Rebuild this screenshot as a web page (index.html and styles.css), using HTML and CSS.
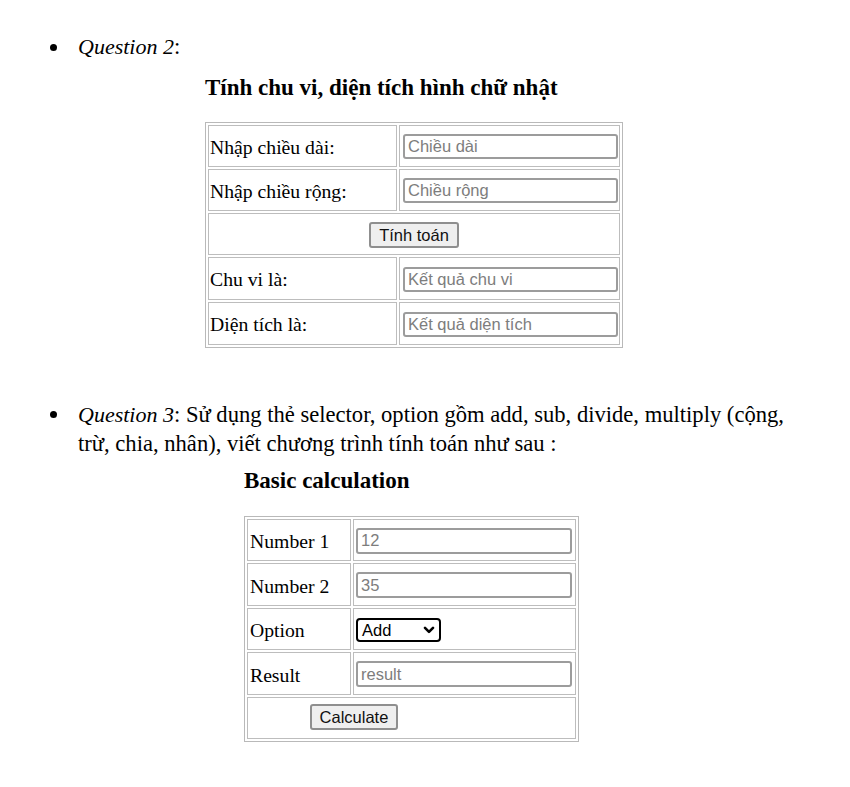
FILE: index.html
```html
<!DOCTYPE html>
<html lang="vi">
<head>
<meta charset="utf-8">
<title>Questions</title>
<link rel="stylesheet" href="styles.css">
</head>
<body>
<div class="doc">
  <div class="item q2">
    <span class="bullet"><span class="dot"></span></span>
    <div class="item-text"><em>Question 2</em>:</div>
  </div>

  <h2 class="title title-1">Tính chu vi, diện tích hình chữ nhật</h2>

  <div class="grid grid-1">
    <div class="cell label">Nhập chiều dài:</div>
    <div class="cell field"><input class="box" type="text" placeholder="Chiều dài"></div>
    <div class="cell label">Nhập chiều rộng:</div>
    <div class="cell field"><input class="box" type="text" placeholder="Chiều rộng"></div>
    <div class="cell span center"><button class="btn btn-1" type="button">Tính toán</button></div>
    <div class="cell label">Chu vi là:</div>
    <div class="cell field"><input class="box" type="text" placeholder="Kết quả chu vi"></div>
    <div class="cell label">Diện tích là:</div>
    <div class="cell field"><input class="box" type="text" placeholder="Kết quả diện tích"></div>
  </div>

  <div class="item q3">
    <span class="bullet"><span class="dot"></span></span>
    <div class="item-text"><em>Question 3</em>: Sử dụng thẻ selector, option gồm add, sub, divide, multiply (cộng, trừ, chia, nhân), viết chương trình tính toán như sau :</div>
  </div>

  <h2 class="title title-2">Basic calculation</h2>

  <div class="grid grid-2">
    <div class="cell label">Number 1</div>
    <div class="cell field"><input class="box" type="text" placeholder="12"></div>
    <div class="cell label">Number 2</div>
    <div class="cell field"><input class="box" type="text" placeholder="35"></div>
    <div class="cell label">Option</div>
    <div class="cell field">
      <div class="select">
        <span>Add</span>
        <svg class="chev" width="12" height="8" viewBox="0 0 12 8"><path d="M2 1.8 L6 5.8 L10 1.8" fill="none" stroke="#000" stroke-width="2.6" stroke-linecap="round" stroke-linejoin="round"/></svg>
      </div>
    </div>
    <div class="cell label">Result</div>
    <div class="cell field"><input class="box" type="text" placeholder="result"></div>
    <div class="cell span calc-cell"><button class="btn btn-2" type="button">Calculate</button></div>
  </div>
</div>
</body>
</html>
```
FILE: styles.css
```css
html, body {
  margin: 0;
  padding: 0;
  background: #ffffff;
}
body {
  font-family: "Liberation Serif", "Times New Roman", serif;
  color: #000;
}
.doc {
  padding-top: 33px;
  width: 850px;
}
.item {
  display: flex;
  padding-left: 50px;
  font-size: 22.6px;
  line-height: 28px;
}
.item em {
  font-size: 22px;
}
.bullet {
  flex: none;
  width: 28px;
  height: 28px;
  display: flex;
  align-items: center;
  box-sizing: border-box;
}
.dot {
  width: 7px;
  height: 7px;
  border-radius: 50%;
  background: #000;
}
.item-text {
  width: 722px;
}
.q3 {
  margin-top: 52px;
  line-height: 29px;
}
.q3 .bullet { height: 29px; }
.title {
  margin: 0;
  font-size: 23px;
  line-height: 28px;
  font-weight: bold;
}
.title-1 {
  margin-top: 13px;
  margin-left: 205px;
}
.title-2 {
  margin-top: 9px;
  margin-left: 244px;
}
.grid {
  display: grid;
  gap: 2px;
  padding: 2px;
  border: 1px solid #b9b9b9;
  width: max-content;
}
.grid-1 {
  margin-left: 205px;
  margin-top: 20px;
  grid-template-columns: 189px 221px;
  grid-template-rows: 42px 42px 42px 43px 43px;
}
.grid-2 {
  margin-left: 244px;
  margin-top: 21px;
  grid-template-columns: 104px 223px;
  grid-template-rows: 42px 43px 42px 43px 42px;
}
.cell {
  border: 1px solid #bdbdbd;
  box-sizing: border-box;
  display: flex;
  align-items: center;
  font-size: 19.7px;
}
.label {
  padding-left: 1px;
  padding-top: 2px;
}
.grid-2 .label { padding-left: 2px; padding-top: 3px; }
.field {
  padding-left: 3px;
  padding-right: 1px;
}
.grid-2 .field { padding-left: 2px; }
.span {
  grid-column: 1 / span 2;
}
.center {
  justify-content: center;
}
.box {
  box-sizing: border-box;
  width: 215px;
  height: 25px;
  margin: 1px 0 0 0;
  border: 2px solid #9c9c9c;
  border-radius: 3px;
  padding: 0 0 0 3px;
  font-family: "Liberation Sans", Arial, sans-serif;
  font-size: 16.5px;
  color: #000;
  background: #fff;
}
.grid-2 .box {
  width: 216px;
  height: 26px;
}
.box::placeholder {
  color: #7d7d7d;
}
.btn {
  box-sizing: border-box;
  height: 26px;
  border: 2px solid #8f8f8f;
  border-radius: 3px;
  background: #efefef;
  font-family: "Liberation Sans", Arial, sans-serif;
  font-size: 16.5px;
  color: #111;
  padding: 0;
}
.btn-1 {
  width: 90px;
  margin-top: 2px;
}
.btn-2 {
  width: 88px;
  margin-top: -2px;
}
.calc-cell {
  padding-left: 62px;
}
.select {
  box-sizing: border-box;
  width: 85px;
  height: 24px;
  border: 2px solid #000;
  border-radius: 4px;
  display: flex;
  align-items: center;
  justify-content: space-between;
  padding: 0 4px 0 4px;
  font-family: "Liberation Sans", Arial, sans-serif;
  font-size: 16.5px;
  margin-top: 2px;
}
.chev {
  display: block;
}
```
